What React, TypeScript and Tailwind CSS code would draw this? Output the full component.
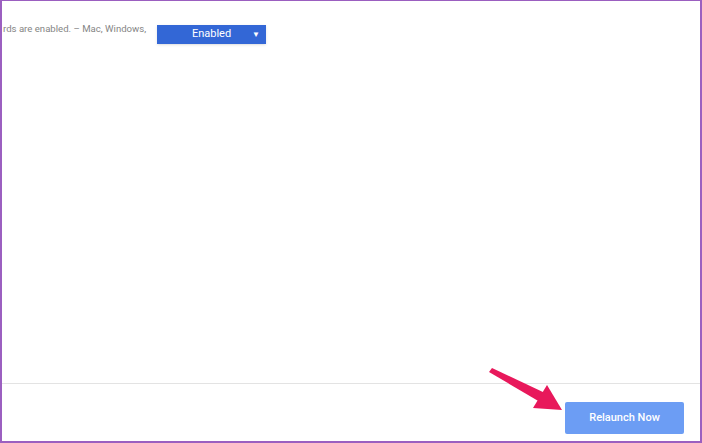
export default function App() {
  return (
    <div className="relative flex h-[443px] w-[702px] flex-col overflow-hidden border-t border-r-2 border-b-2 border-l-2 border-[#9b5fc0] bg-white font-['Roboto','Liberation_Sans',sans-serif]">
      <div className="flex items-start pt-[24px]">
        <p className="-mt-[3px] w-[155px] shrink-0 pl-[1px] text-[9.6px] leading-[14px] whitespace-nowrap text-[#858585]">
          rds are enabled. – Mac, Windows,
        </p>
        <div className="flex h-[19px] w-[109px] items-center bg-[#3367d6] pr-[6px] pl-[14px] text-white shadow-sm">
          <span className="flex-1 text-center text-[11px]">Enabled</span>
          <span className="text-[8px]">▼</span>
        </div>
      </div>
      <div className="flex-1" />
      <div className="flex h-[58px] justify-end border-t border-[#e3e3e3] pt-[18px] pr-[16px]">
        <button className="h-[32px] w-[119px] rounded-[2px] bg-[#6c9df4] text-[11px] font-medium text-white">
          Relaunch Now
        </button>
      </div>
      <svg className="pointer-events-none absolute top-0 left-0" width="702" height="443">
        <polygon points="487,371 490,367 543,392 538,401" fill="#e8185b" />
        <polygon points="545,384 560,409 531,407" fill="#e8185b" />
      </svg>
    </div>
  );
}
